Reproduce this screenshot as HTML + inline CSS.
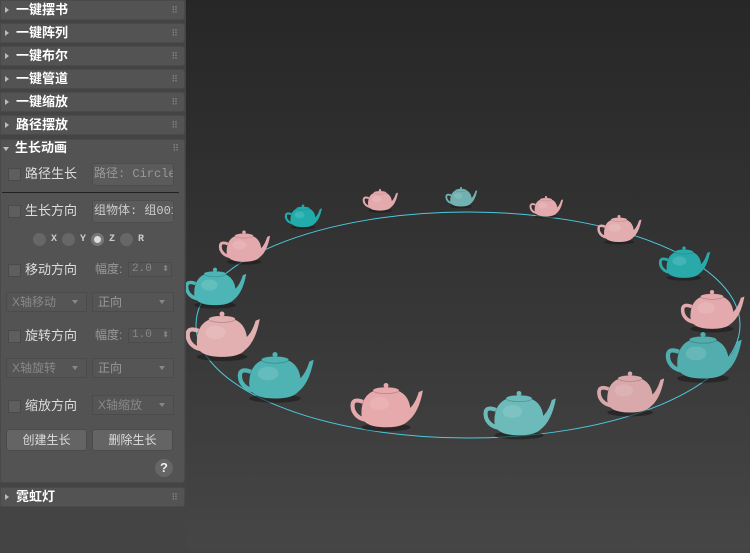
<!DOCTYPE html>
<html><head><meta charset="utf-8"><style>
*{margin:0;padding:0;box-sizing:border-box}
body{width:750px;height:548px;overflow:hidden;background:#444;font-family:"Liberation Sans","Noto Sans CJK SC",sans-serif;position:relative}
#vp{position:absolute;left:186px;top:0;width:564px;height:548px;background:linear-gradient(#272727,#363636 55%,#464646)}
#panel{position:absolute;left:0;top:0;width:186px;height:548px;background:#444}
.hd{position:absolute;left:0;width:185px;height:20px;background:#535353;border:1px solid #4a4a4a;border-radius:0 3px 3px 0;color:#fff;font-weight:bold;font-size:13px;line-height:18px;padding-left:15px}
.hd:before{content:"";position:absolute;left:4px;top:6px;border-left:4px solid #bbb;border-top:3px solid transparent;border-bottom:3px solid transparent}
.hd.open:before{left:3px;top:8px;border-top:4px solid #cbb;border-left:3px solid transparent;border-right:3px solid transparent;border-bottom:0}
.hd:after{content:"⠿";position:absolute;right:6px;top:0;font-size:9px;color:#888;font-weight:normal}
#roll{position:absolute;left:0;top:139px;width:185px;height:344px;background:#535353;border:1px solid #4a4a4a;border-radius:0 3px 3px 0}
.a{position:absolute;font-size:13px;color:#ddd;white-space:nowrap;line-height:16px}
.cb{position:absolute;width:13px;height:13px;background:#5e5e5e;border:1px solid #4a4a4a}
.fld{position:absolute;background:#5b5b5b;border:1px solid #4d4d4d;border-radius:3px;color:#999;font-size:12px;line-height:20px;padding-left:1px;overflow:hidden;white-space:nowrap;font-family:"Liberation Mono","Noto Sans CJK SC",monospace}
.dd{position:absolute;height:20px;border:1px solid #4b4b4b;background:#555;color:#888;font-size:12px;line-height:18px;padding-left:5px}
.dd:after{content:"";position:absolute;right:8px;top:7px;border-top:4px solid #888;border-left:3px solid transparent;border-right:3px solid transparent}
.rd{position:absolute;top:233px;width:13px;height:13px;border-radius:50%;background:#676767}
.rl{position:absolute;top:233px;font-size:10px;color:#ccc;font-family:"Liberation Mono",monospace;font-weight:bold;line-height:13px}
.btn{position:absolute;top:429px;width:81px;height:22px;background:#646464;border:1px solid #4b4b4b;border-radius:3px;color:#ddd;font-size:12px;text-align:center;line-height:20px}
.sp{position:absolute;width:44px;height:15px;border:1px solid #4b4b4b;background:#555;color:#888;font-size:11px;font-family:"Liberation Mono",monospace;line-height:13px;padding-left:3px}
.sp:after{content:"⬍";position:absolute;right:2px;top:0;font-size:8px}
</style></head><body>
<div id="vp">
<svg width="564" height="548" viewBox="186 0 564 548">
<defs>
<symbol id="tp" viewBox="-50 -42 100 72">
<ellipse cx="0" cy="23" rx="30" ry="5" fill="#1a1a1a" opacity=".6"/>
<path d="M-28 -8 Q-44 -14 -40 2 Q-36 12 -24 14" fill="none" stroke="currentColor" stroke-width="5"/>
<path d="M22 4 Q34 0 40 -20 L45 -22 Q40 6 26 16Z" fill="currentColor"/>
<path d="M-30 6 Q-30 -24 0 -24 Q30 -24 30 6 Q30 23 0 23 Q-30 23 -30 6Z" fill="currentColor"/>
<ellipse cx="0" cy="-22" rx="16" ry="4" fill="currentColor" stroke="#0003"/>
<circle cx="0" cy="-28" r="3" fill="currentColor"/>
<ellipse cx="-8" cy="-6" rx="12" ry="8" fill="#fff" opacity=".12"/>
</symbol>
</defs>
<ellipse cx="468" cy="325" rx="272" ry="113" fill="none" stroke="#4cc9de" stroke-width="1"/>
<g>
<use href="#tp" x="360" y="184" width="40" height="30" color="#e3a9ad"/>
<use href="#tp" x="443" y="182" width="36" height="28" color="#71b1b1"/>
<use href="#tp" x="527" y="191" width="38" height="29" color="#e3a9ad"/>
<use href="#tp" x="594" y="209" width="50" height="37" color="#e3adb0"/>
<use href="#tp" x="655" y="240" width="58" height="42" color="#2aa9ab"/>
<use href="#tp" x="676" y="282" width="72" height="52" color="#e3a9ad"/>
<use href="#tp" x="660" y="322" width="86" height="63" color="#52aeae"/>
<use href="#tp" x="592" y="362" width="76" height="57" color="#d9a8ab"/>
<use href="#tp" x="478" y="380" width="82" height="63" color="#6dbaba"/>
<use href="#tp" x="345" y="372" width="82" height="63" color="#e6a9ac"/>
<use href="#tp" x="232" y="342" width="86" height="63" color="#4fb3b3"/>
<use href="#tp" x="180" y="302" width="84" height="61" color="#e3b0b2"/>
<use href="#tp" x="180" y="260" width="70" height="50" color="#4eb5b6"/>
<use href="#tp" x="215" y="224" width="58" height="42" color="#e3a9ad"/>
<use href="#tp" x="282" y="199" width="42" height="32" color="#22abab"/>
</g>
</svg>
</div>
<div id="panel">
<div class="hd" style="top:0">一键摆书</div>
<div class="hd" style="top:23px">一键阵列</div>
<div class="hd" style="top:46px">一键布尔</div>
<div class="hd" style="top:69px">一键管道</div>
<div class="hd" style="top:92px">一键缩放</div>
<div class="hd" style="top:115px">路径摆放</div>
<div id="roll"></div>
<div class="hd open" style="top:139px;border:0;background:transparent">生长动画</div>
<div class="cb" style="left:8px;top:168px"></div><div class="a" style="left:25px;top:166px">路径生长</div>
<div class="fld" style="left:92px;top:163px;width:82px;height:23px">路径: Circle00</div>
<div style="position:absolute;left:2px;top:192px;width:177px;height:1px;background:#222"></div>
<div class="cb" style="left:8px;top:205px"></div><div class="a" style="left:25px;top:203px">生长方向</div>
<div class="fld" style="left:92px;top:200px;width:82px;height:23px;color:#ccc">组物体: 组001</div>
<div class="rd" style="left:33px"></div><div class="rl" style="left:51px">X</div>
<div class="rd" style="left:62px"></div><div class="rl" style="left:80px">Y</div>
<div class="rd" style="left:91px;background:#777"><div style="position:absolute;left:3px;top:3px;width:7px;height:7px;border-radius:50%;background:#ddd"></div></div><div class="rl" style="left:109px">Z</div>
<div class="rd" style="left:120px"></div><div class="rl" style="left:138px">R</div>
<div class="cb" style="left:8px;top:264px"></div><div class="a" style="left:25px;top:262px">移动方向</div>
<div class="a" style="left:95px;top:261px;color:#999;font-size:12px">幅度:</div><div class="sp" style="left:128px;top:262px">2.0</div>
<div class="dd" style="left:6px;top:292px;width:81px">X轴移动</div>
<div class="dd" style="left:92px;top:292px;width:82px;color:#999">正向</div>
<div class="cb" style="left:8px;top:330px"></div><div class="a" style="left:25px;top:328px">旋转方向</div>
<div class="a" style="left:95px;top:327px;color:#999;font-size:12px">幅度:</div><div class="sp" style="left:128px;top:328px">1.0</div>
<div class="dd" style="left:6px;top:358px;width:81px">X轴旋转</div>
<div class="dd" style="left:92px;top:358px;width:82px;color:#999">正向</div>
<div class="cb" style="left:8px;top:400px"></div><div class="a" style="left:25px;top:398px">缩放方向</div>
<div class="dd" style="left:92px;top:395px;width:82px">X轴缩放</div>
<div class="btn" style="left:6px">创建生长</div>
<div class="btn" style="left:92px">删除生长</div>
<div style="position:absolute;left:155px;top:459px;width:18px;height:18px;border-radius:50%;background:#666;color:#eee;font-weight:bold;font-size:13px;text-align:center;line-height:18px">?</div>
<div class="hd" style="top:487px">霓虹灯</div>
</div>
</body></html>
